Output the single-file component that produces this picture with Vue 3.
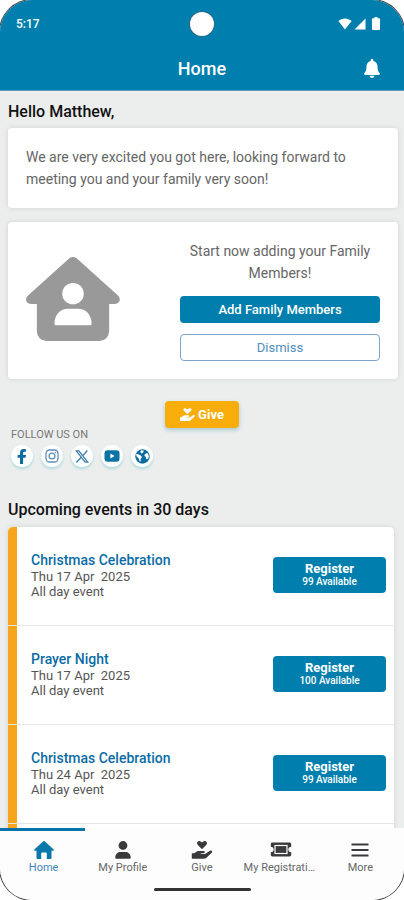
<script setup>
const socials = [
  { id: 'facebook', label: 'Facebook' },
  { id: 'instagram', label: 'Instagram' },
  { id: 'x', label: 'X' },
  { id: 'youtube', label: 'YouTube' },
  { id: 'website', label: 'Website' },
]

const events = [
  { title: 'Christmas Celebration', date: 'Thu 17 Apr  2025', time: 'All day event', seats: 99 },
  { title: 'Prayer Night', date: 'Thu 17 Apr  2025', time: 'All day event', seats: 100 },
  { title: 'Christmas Celebration', date: 'Thu 24 Apr  2025', time: 'All day event', seats: 99 },
]

const tabs = [
  { id: 'home', label: 'Home', active: true },
  { id: 'profile', label: 'My Profile' },
  { id: 'give', label: 'Give' },
  { id: 'registrations', label: 'My Registrations' },
  { id: 'more', label: 'More' },
]
</script>

<template>
  <div class="phone">
    <header class="top">
      <div class="status">
        <span class="clock">5:17</span>
        <span class="camera"></span>
        <span class="signals">
          <svg width="14" height="12" viewBox="0 0 14 12"><path d="M.4 3C4-.5 10-.5 13.600 3L7 11.400z" fill="#fff" /></svg>
          <svg width="12" height="12" viewBox="0 0 12 12"><path d="M11.500.5v11H.5z" fill="#fff" /></svg>
          <svg class="battery" width="8" height="13" viewBox="0 0 8 13"><path d="M2.500 0h3v1.200H7a1 1 0 0 1 1 1V12a1 1 0 0 1-1 1H1a1 1 0 0 1-1-1V2.200a1 1 0 0 1 1-1h1.500z" fill="#fff" /></svg>
        </span>
      </div>
      <div class="titlebar">
        <h1>Home</h1>
        <button class="bell" aria-label="Notifications">
          <svg width="16" height="19" viewBox="0 0 16 19"><path d="M8 0c.8 0 1.300.5 1.300 1.200v.7c2.700.6 4.200 2.700 4.200 5.400 0 4 .8 5.300 2.100 6.700.7.800.2 2-.9 2H1.300c-1.100 0-1.600-1.200-.9-2 1.300-1.400 2.100-2.700 2.100-6.700 0-2.700 1.500-4.800 4.200-5.400v-.7C6.700.5 7.200 0 8 0zM5.700 16.700h4.600C10.300 18 9.300 19 8 19s-2.300-1-2.300-2.300z" fill="#fff" /></svg>
        </button>
      </div>
    </header>

    <main class="content">
      <h2>Hello Matthew,</h2>
      <section class="card welcome">
        <p>We are very excited you got here, looking forward to meeting you and your family very soon!</p>
      </section>

      <section class="card family">
        <svg class="house" width="94" height="84" viewBox="0 0 96 86">
          <path d="M44 1.500a6 6 0 0 1 8 0L93.500 39c4.500 4 2 9-2.500 9h-6v28a10 10 0 0 1-10 10H21a10 10 0 0 1-10-10V48H5c-5 0-7-5-2.500-9z" fill="#999" />
          <circle cx="48" cy="37.500" r="11" fill="#fff" />
          <path d="M29 68c0-9 6-15 14-15h10c8 0 14 6 14 15 0 1.300-.7 2-2 2H31c-1.300 0-2-.7-2-2z" fill="#fff" />
        </svg>
        <div class="invite">
          <p>Start now adding your Family Members!</p>
          <button class="btn solid">Add Family Members</button>
          <button class="btn outline">Dismiss</button>
        </div>
      </section>

      <button class="give">
        <svg width="15" height="13" viewBox="0 0 15 13" fill="#fff">
          <path d="M7.500 6.200 3.700 2.600C2.600 1.200 4.600-.6 6 .6l1.500.8L9 .6c1.400-1.200 3.400.6 2.300 2z" />
          <path d="M0 9.200h1.500l1.600-1.300c.5-.4 1-.6 1.700-.6h3.600c1.200 0 1.200 1.600 0 1.600H6.700v.5H9.500l3.600-2.200c1.200-.7 2.400.6 1.300 1.600l-3.600 3.200c-.6.6-1.200 1-2 1H0z" />
        </svg>
        <span>Give</span>
      </button>

      <p class="follow">FOLLOW US ON</p>
      <nav class="socials" aria-label="Social media">
        <a v-for="s in socials" :key="s.id" href="#" :aria-label="s.label">
          <svg v-if="s.id === 'facebook'" width="10" height="15" viewBox="0 0 10 15"><path d="M3 15V8.700H.6V5.900H3V4c0-2.600 1.400-4 3.700-4 1 0 2.200.2 2.200.2v2.500H7.600c-1.100 0-1.500.6-1.500 1.400v1.800H9l-.5 2.800H6.100V15z" fill="#0b6ba3" /></svg>
          <svg v-else-if="s.id === 'instagram'" width="14" height="14" viewBox="0 0 14 14" fill="none" stroke="#5f8fba"><rect x="1" y="1" width="12" height="12" rx="3.500" stroke-width="1.300" /><circle cx="7" cy="7" r="2.900" stroke-width="1.300" /><circle cx="10.400" cy="3.600" r=".4" /></svg>
          <svg v-else-if="s.id === 'x'" width="14" height="13" viewBox="0 0 14 13" fill="none" stroke="#3f7fae"><path d="M1.300.8h2.600l8.800 11.400h-2.600z" stroke-width="1.300" /><path d="M12.300.5 7.900 5.600M6 7.600 1.400 12.500" stroke-width="1.400" /></svg>
          <svg v-else-if="s.id === 'youtube'" width="16" height="12" viewBox="0 0 16 12"><rect x=".5" y=".3" width="15" height="11.400" rx="3" fill="#0b74a5" /><path d="M6.400 3.600v4.800L10.500 6z" fill="#fff" /></svg>
          <svg v-else width="15" height="15" viewBox="0 0 15 15"><circle cx="7.500" cy="7.500" r="7.200" fill="#0b6ba3" /><path d="M1 5.200 2.600 5l2.900 1.200L7 8 5.600 10v2.600l-1.200-.4-.5-2.400L1.700 7.800zM6.200 1.200l2.600.3-.6 1.900-1.700 1-1.300-1.500zM9.600 5.400l1.500-1.200 2 .4.900 3-1.400 2.700-1.500-.4-.2-2-1.400-.8z" fill="#fff" /></svg>
        </a>
      </nav>

      <h2 class="upcoming">Upcoming events in 30 days</h2>
      <ul class="events">
        <li v-for="(e, i) in events" :key="i">
          <div class="info">
            <h3>{{ e.title }}</h3>
            <p>{{ e.date }}</p>
            <p>{{ e.time }}</p>
          </div>
          <button class="register">
            <strong>Register</strong>
            <span>{{ e.seats }} Available</span>
          </button>
        </li>
        <li aria-hidden="true"></li>
      </ul>
    </main>

    <footer class="bottom">
      <div class="indicator"></div>
      <nav class="tabs" aria-label="Main">
        <a v-for="t in tabs" :key="t.id" href="#" :class="{ active: t.active }">
          <svg v-if="t.id === 'home'" width="20" height="18" viewBox="0 0 20 18"><path d="M9.300.3a1 1 0 0 1 1.400 0l9 8.200c.5.600.2 1.300-.5 1.300h-1.700V17a1 1 0 0 1-1 1h-3.700v-5.400a1 1 0 0 0-1-1H8.200a1 1 0 0 0-1 1V18H3.500a1 1 0 0 1-1-1V9.800H.8C.1 9.800-.2 9.100.3 8.500z" fill="#0a78aa" /></svg>
          <svg v-else-if="t.id === 'profile'" width="16" height="18" viewBox="0 0 16 18" fill="#3a3a3c"><circle cx="8" cy="4.500" r="4.400" /><path d="M.3 16.500C.3 13 2.700 11 6 11h4c3.300 0 5.700 2 5.700 5.500 0 .9-.4 1.300-1.200 1.300h-13c-.8 0-1.200-.4-1.200-1.300z" /></svg>
          <svg v-else-if="t.id === 'give'" width="22" height="18" viewBox="0 0 22 18" fill="#3a3a3c"><path d="M11 8.200 6.800 4C4.600 1.300 7.600-1.300 10 .7l1 .9 1-.9c2.400-2 5.400.6 3.200 3.300z" /><path d="M.8 12.300h2.600l1.900-1.500c.7-.5 1.400-.8 2.300-.8h5c1.600 0 1.600 2.200 0 2.200h-2.800v.8h4.200l4.900-3.300c1.500-1 3.200.8 1.800 2.100l-5 4.700c-.9.800-1.700 1.200-2.900 1.200H.8z" /></svg>
          <svg v-else-if="t.id === 'registrations'" width="22" height="15" viewBox="0 0 22 15"><path d="M2.500.5h17c1 0 1.700.7 1.700 1.700v2.500a2.800 2.800 0 0 0 0 5.600v2.500c0 1-.7 1.700-1.700 1.700h-17c-1 0-1.700-.7-1.700-1.700v-2.500a2.800 2.800 0 0 0 0-5.600V2.200C.8 1.200 1.500.5 2.500.5z" fill="#3a3a3c" /><rect x="5" y="3.500" width="12" height="8" fill="#3a3a3c" stroke="#fff" stroke-width="1.200" /></svg>
          <svg v-else width="18" height="14" viewBox="0 0 18 14"><path d="M.5 1.500h17M.5 7h17M.5 12.500h17" stroke="#3a3a3c" stroke-width="1.800" /></svg>
          <span>{{ t.label }}</span>
        </a>
      </nav>
      <div class="gesture"></div>
    </footer>
  </div>
</template>

<style>
body {
  background: #fff;
  overflow: hidden;
}
</style>

<style scoped>
* {
  box-sizing: border-box;
}
h1, h2, h3, p, ul {
  margin: 0;
  padding: 0;
}
svg {
  display: block;
  flex: none;
}
button {
  font-family: inherit;
  border: 0;
  padding: 0;
  cursor: pointer;
}
a {
  text-decoration: none;
}
.phone {
  display: flex;
  flex-direction: column;
  height: 100vh;
  overflow: hidden;
  border-radius: 32px;
  box-shadow: 0 0 0 1px #444;
  background: #eceeee;
  font-family: Roboto, sans-serif;
  color: #111;
}
.top {
  flex: none;
  background: #007fae;
  color: #fff;
  border-bottom: 1px solid #5b9dc6;
}
.status {
  display: grid;
  grid-template-columns: 1fr auto 1fr;
  align-items: center;
  height: 47px;
  padding: 0 24px 0 16px;
}
.clock {
  font-size: 12px;
  font-weight: 500;
}
.camera {
  width: 24px;
  height: 24px;
  margin-left: 8px;
  border-radius: 50%;
  background: #fff;
  box-shadow: 0 0 0 1px #246a8a;
}
.signals {
  display: flex;
  justify-content: flex-end;
  align-items: center;
  gap: 2px;
}
.battery {
  margin-left: 4px;
}
.titlebar {
  display: grid;
  grid-template-columns: 1fr auto 1fr;
  align-items: center;
  height: 43px;
  padding: 0 24px;
}
h1 {
  grid-column: 2;
  font-size: 18px;
  font-weight: 500;
}
.bell {
  justify-self: end;
  background: none;
}
.content {
  flex: 1;
  min-height: 0;
  overflow: hidden;
  padding: 11px 8px 0;
}
h2 {
  font-size: 16px;
  line-height: 20px;
  font-weight: 500;
}
.card {
  margin-right: -2px;
  border-radius: 4px;
  background: #fff;
  box-shadow: 0 0 5px rgba(0, 0, 0, 0.12);
}
.card p {
  font-size: 14px;
  line-height: 22px;
  color: #666;
}
.welcome {
  margin-top: 6px;
  padding: 18px;
}
.family {
  display: flex;
  justify-content: space-between;
  align-items: center;
  margin-top: 14px;
  padding: 18px;
}
.house {
  margin-bottom: 4px;
}
.invite {
  display: flex;
  flex: 0 1 200px;
  flex-direction: column;
  text-align: center;
}
.btn {
  height: 27px;
  border-radius: 4px;
  font-size: 13px;
}
.solid {
  margin-top: 12px;
  background: #007fae;
  color: #fff;
  font-weight: 500;
}
.outline {
  margin-top: 11px;
  border: 1px solid #7fa3cc;
  background: #fff;
  color: #4f8dbd;
}
.give {
  display: flex;
  justify-content: center;
  align-items: center;
  gap: 3px;
  width: 74px;
  height: 27px;
  margin: 22px auto 0;
  border-radius: 4px;
  background: #f8ad0b;
  box-shadow: 0 2px 4px rgba(0, 110, 130, 0.3);
  color: #fff;
  font-size: 13px;
  font-weight: 700;
}
.follow {
  padding-left: 3px;
  font-size: 11px;
  line-height: 13px;
  color: #777;
}
.socials {
  display: flex;
  gap: 8px;
  margin-top: 4px;
  padding-left: 3px;
}
.socials a {
  display: grid;
  place-items: center;
  width: 22px;
  height: 22px;
  border-radius: 50%;
  background: #fff;
  box-shadow: 0 2px 3px rgba(0, 160, 170, 0.25);
}
.upcoming {
  margin-top: 33px;
}
.events {
  margin: 7px 2px 0 0;
  list-style: none;
  border-radius: 5px;
  overflow: hidden;
  background: #fff;
  box-shadow: 0 0 5px rgba(0, 0, 0, 0.12);
}
.events li {
  display: flex;
  justify-content: space-between;
  align-items: center;
  height: 99px;
  padding: 0 8px 2px 23px;
  border-bottom: 1px solid #e6e6e6;
  background: linear-gradient(to right, #f7a51d 9px, #fff 9px) padding-box;
}
.info h3 {
  font-size: 14px;
  line-height: 18px;
  font-weight: 500;
  color: #0b6ca5;
}
.info p {
  font-size: 13px;
  line-height: 15px;
  color: #555;
  white-space: pre;
}
.register {
  display: flex;
  flex-direction: column;
  justify-content: center;
  align-items: center;
  width: 113px;
  height: 36px;
  border-radius: 4px;
  background: #007fae;
  color: #fff;
}
.register strong {
  font-size: 13px;
  line-height: 14px;
  font-weight: 700;
}
.register span {
  font-size: 10px;
  line-height: 12px;
  font-weight: 500;
}
.bottom {
  flex: none;
  background: #fdfdfd;
}
.indicator {
  width: 21%;
  height: 3px;
  background: #0873ab;
}
.tabs {
  display: grid;
  grid-template-columns: repeat(5, minmax(0, 1fr));
  height: 51px;
  padding: 0 4px;
}
.tabs a {
  display: grid;
  grid-template-columns: minmax(0, auto);
  grid-template-rows: 22px 14px;
  align-content: center;
  justify-content: center;
  place-items: center;
  padding: 0 2px;
  font-size: 11px;
  line-height: 14px;
  color: #666;
}
.tabs a span {
  max-width: 100%;
  overflow: hidden;
  text-overflow: ellipsis;
  white-space: nowrap;
}
.tabs .active {
  color: #3d86bb;
}
.gesture {
  width: 97px;
  height: 3px;
  margin: 6px auto 9px;
  border-radius: 2px;
  background: #333;
}
</style>
